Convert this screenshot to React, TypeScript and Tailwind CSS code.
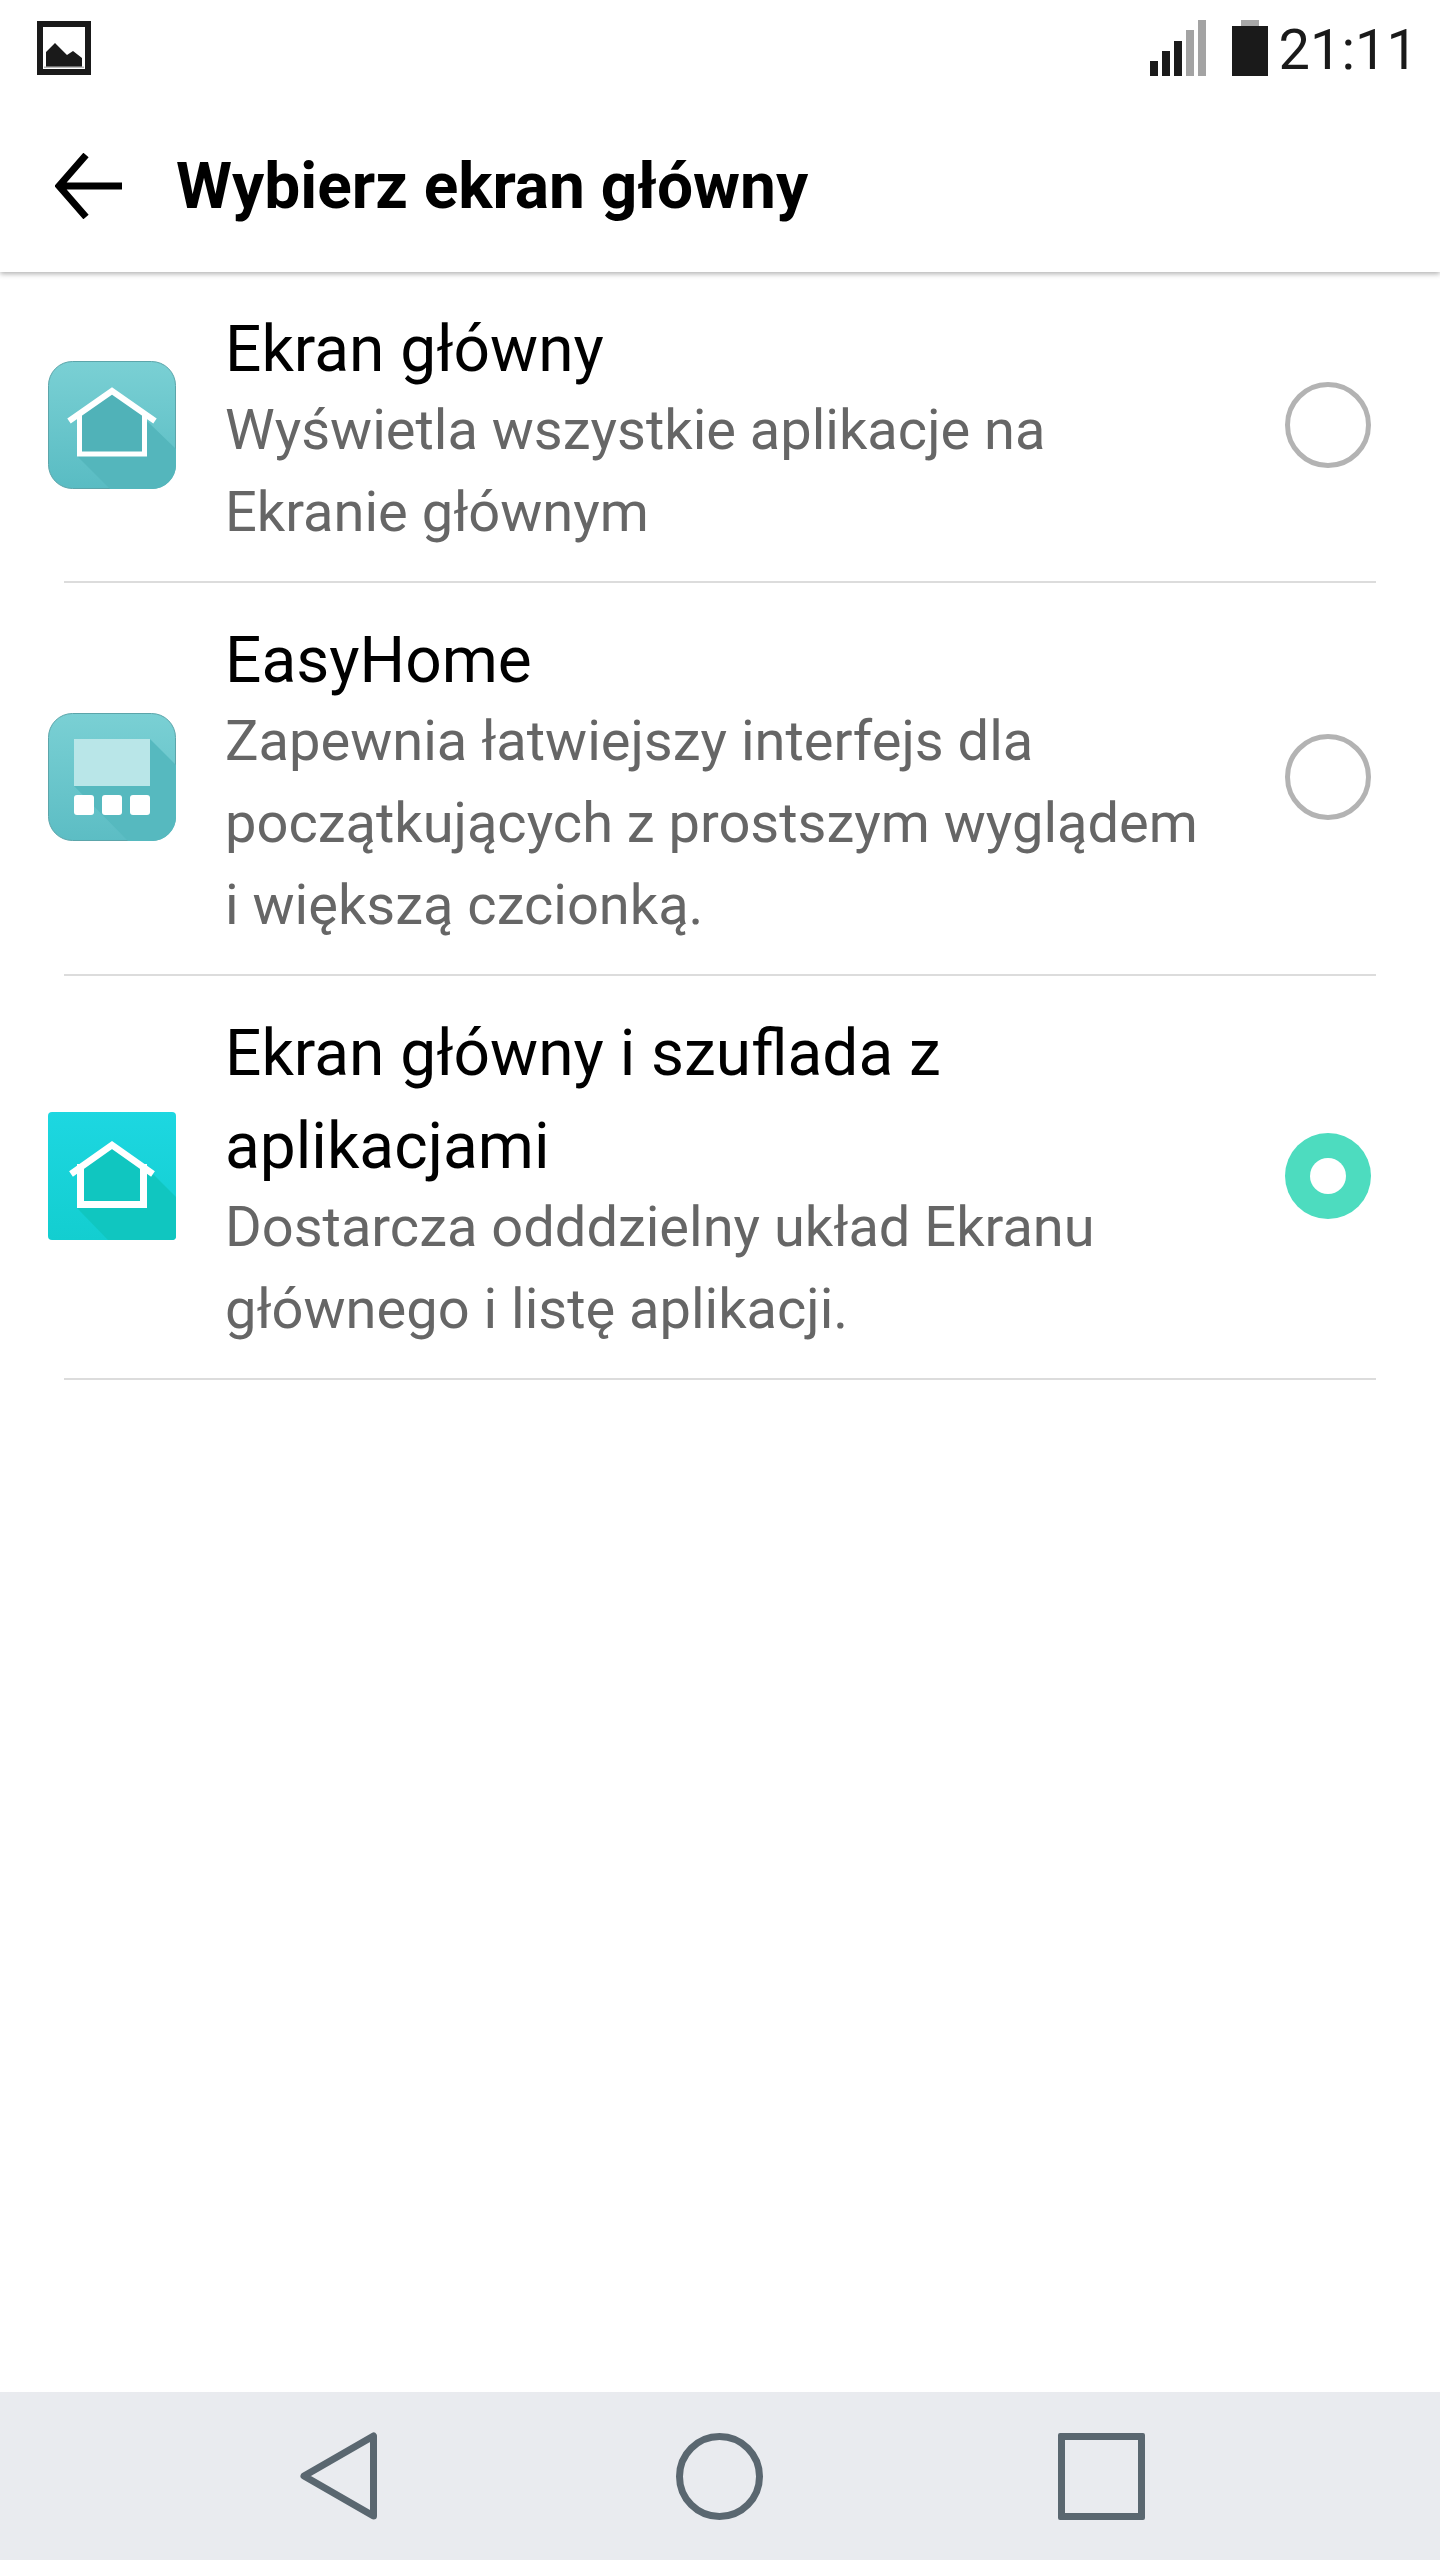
const OPTIONS = [
  {
    id: "home",
    title: "Ekran główny",
    body: "Wyświetla wszystkie aplikacje na Ekranie głównym",
    icon: "home",
    selected: false,
  },
  {
    id: "easy",
    title: "EasyHome",
    body: "Zapewnia łatwiejszy interfejs dla początkujących z prostszym wyglądem i większą czcionką.",
    icon: "easy",
    selected: false,
  },
  {
    id: "drawer",
    title: "Ekran główny i szuflada z aplikacjami",
    body: "Dostarcza odddzielny układ Ekranu głównego i listę aplikacji.",
    icon: "drawer",
    selected: true,
  },
];

function HomeIcon() {
  return (
    <svg width="128" height="128" viewBox="0 0 128 128" className="mb-[3px] shrink-0">
      <defs>
        <linearGradient id="homeBg" x1="0" y1="0" x2="0" y2="1">
          <stop offset="0" stopColor="#7ad0d4" />
          <stop offset="1" stopColor="#59bcc3" />
        </linearGradient>
        <clipPath id="homeClip">
          <rect width="128" height="128" rx="24" />
        </clipPath>
      </defs>
      <rect x="0.5" y="0.5" width="127" height="127" rx="24" fill="url(#homeBg)" stroke="#5ca5aa" />
      <g clipPath="url(#homeClip)">
        {/* long shadow */}
        <path d="M29 95 L62 128 L128 128 L128 88 L100 61 L64 28 Z" fill="#54b6bc" />
      </g>
      <path d="M31 52 L64 30 L97 52 V93 H31 Z" fill="#50b2b8" />
      <path d="M31.5 52 V93 H96.5 V52" fill="none" stroke="#fff" strokeWidth="5" />
      <path d="M21 60 L64 30 L107 60" fill="none" stroke="#fff" strokeWidth="6" />
    </svg>
  );
}

function EasyIcon() {
  return (
    <svg width="128" height="128" viewBox="0 0 128 128" className="mb-[3px] shrink-0">
      <defs>
        <linearGradient id="easyBg" x1="0" y1="0" x2="0" y2="1">
          <stop offset="0" stopColor="#7ad0d4" />
          <stop offset="1" stopColor="#5cbdc4" />
        </linearGradient>
        <clipPath id="easyClip">
          <rect width="128" height="128" rx="24" />
        </clipPath>
      </defs>
      <rect x="0.5" y="0.5" width="127" height="127" rx="24" fill="url(#easyBg)" stroke="#5ca5aa" />
      <g clipPath="url(#easyClip)">
        <path d="M26 73 L80 128 L128 128 L128 52 L102 26 Z" fill="#56b9bf" />
      </g>
      <rect x="26" y="26" width="76" height="47" fill="#b9e6e8" />
      <rect x="26" y="82" width="20" height="20" rx="3" fill="#fff" />
      <rect x="54" y="82" width="20" height="20" rx="3" fill="#fff" />
      <rect x="82" y="82" width="20" height="20" rx="3" fill="#fff" />
    </svg>
  );
}

function DrawerIcon() {
  return (
    <svg width="128" height="128" viewBox="0 0 128 128" className="mb-[3px] shrink-0">
      <defs>
        <linearGradient id="drawerBg" x1="0" y1="0" x2="0" y2="1">
          <stop offset="0" stopColor="#1dd7e1" />
          <stop offset="1" stopColor="#13ced0" />
        </linearGradient>
        <clipPath id="drawerClip">
          <rect width="128" height="128" rx="4" />
        </clipPath>
      </defs>
      <rect width="128" height="128" rx="4" fill="url(#drawerBg)" />
      <g clipPath="url(#drawerClip)">
        <path d="M29 96 L60 128 L128 128 L128 85 L106 63 L64 30 Z" fill="#10c6c0" />
      </g>
      <path d="M32 54 L64 33 L96 54 V92 H32 Z" fill="#10c6c0" />
      <path d="M32.5 52 V92.5 H95.5 V52" fill="none" stroke="#fff" strokeWidth="7" />
      <path d="M23 62 L64 33 L105 62" fill="none" stroke="#fff" strokeWidth="6.5" />
    </svg>
  );
}

function OptionIcon({ kind }: { kind: string }) {
  if (kind === "easy") return <EasyIcon />;
  if (kind === "drawer") return <DrawerIcon />;
  return <HomeIcon />;
}

function Radio({ selected }: { selected: boolean }) {
  if (selected) {
    return (
      <span className="flex h-[86px] w-[86px] shrink-0 items-center justify-center rounded-full bg-[#4ddcbf]">
        <span className="h-9 w-9 rounded-full bg-white" />
      </span>
    );
  }
  return <span className="block h-[86px] w-[86px] shrink-0 rounded-full border-[5px] border-[#b3b3b3]" />;
}

function StatusBar() {
  return (
    <div className="flex h-[100px] items-start justify-between pl-[37px] pr-[22px]">
      <svg width="54" height="54" viewBox="0 0 54 54" className="mt-[21px]">
        <rect width="54" height="54" fill="#1a1a1a" />
        <rect x="6" y="6" width="42" height="42" fill="#fff" />
        <path d="M9 46 V31 L18 22 L30 34 L36 30 L45 37 V46 Z" fill="#1a1a1a" />
        <rect x="7" y="45.5" width="40" height="1.5" fill="#bbb" />
      </svg>
      <div className="flex items-start">
        <svg width="56" height="56" viewBox="0 0 56 56" className="mt-[20px]">
          <rect x="0" y="41" width="8" height="15" fill="#1a1a1a" />
          <rect x="12" y="31" width="8" height="25" fill="#1a1a1a" />
          <rect x="24" y="21" width="8" height="35" fill="#1a1a1a" />
          <rect x="36" y="10" width="8" height="46" fill="#a3a3a3" />
          <rect x="48" y="0" width="8" height="56" fill="#a3a3a3" />
        </svg>
        <div className="ml-[26px] mt-[20px] flex w-9 flex-col items-center">
          <div className="h-1.5 w-[18px] bg-[#a8a8a8]" />
          <div className="h-[50px] w-9 bg-[#1a1a1a]" />
        </div>
        <span className="ml-[11px] mt-[17px] text-[56px] leading-[66px] font-normal text-[#1a1a1a]">21:11</span>
      </div>
    </div>
  );
}

function NavBar() {
  return (
    <nav className="h-[168px] shrink-0 bg-[#e9ebef]">
      <div className="flex h-full items-center justify-between pl-[299px] pr-[295px]">
        <svg width="80" height="90" viewBox="0 0 80 90" fill="none">
          <path d="M74.5 5 V85 L5 45 Z" stroke="#5a6770" strokeWidth="7" strokeLinejoin="round" />
        </svg>
        <span className="ml-[2px] block h-[87px] w-[87px] rounded-full border-[7px] border-[#5a6770]" />
        <span className="block h-[87px] w-[87px] rounded-[2px] border-[7px] border-[#5a6770]" />
      </div>
    </nav>
  );
}

export default function App() {
  return (
    <div className="flex h-[2560px] w-[1440px] flex-col bg-white font-['Roboto',sans-serif]">
      <header className="relative z-10 h-[272px] shrink-0 bg-white shadow-[0_2px_5px_rgba(0,0,0,0.3)]">
        <StatusBar />
        <div className="flex h-[172px] items-center">
          <svg width="68" height="66" viewBox="0 0 68 66" fill="none" className="ml-[55px]">
            <path d="M67 33 H4 M31 2 L4 33 L31 64" stroke="#000" strokeWidth="7" />
          </svg>
          <h1 className="ml-[53px] mt-[2px] text-[64px] leading-none font-bold text-black">Wybierz ekran główny</h1>
        </div>
      </header>

      <main className="flex-1">
        {OPTIONS.map((o) => (
          <div key={o.id}>
            <div className="flex items-center pl-12 pr-[69px]">
              <OptionIcon kind={o.icon} />
              <div className="ml-[49px] w-[985px] pt-[31px] pb-[28px]">
                <p className="text-[64px] leading-[93px] text-black">{o.title}</p>
                <p className="-mt-[7px] text-[56px] leading-[82px] text-[#666]">{o.body}</p>
              </div>
              <div className="mb-[3px] ml-auto">
                <Radio selected={o.selected} />
              </div>
            </div>
            <div className="ml-16 h-0.5 w-[1312px] bg-[#dcdcdc]" />
          </div>
        ))}
      </main>

      <NavBar />
    </div>
  );
}
